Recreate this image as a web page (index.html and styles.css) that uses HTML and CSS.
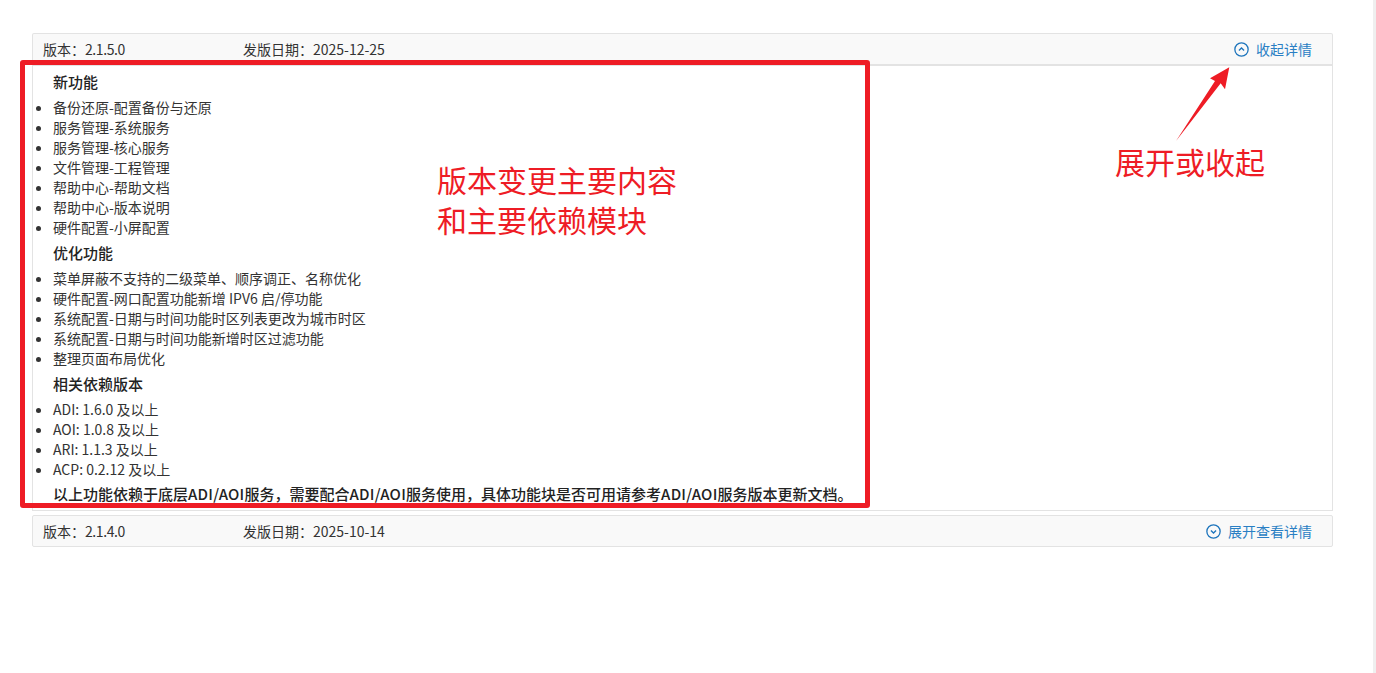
FILE: index.html
```html
<!DOCTYPE html>
<html lang="zh-CN">
<head>
<meta charset="utf-8">
<title>版本说明</title>
<link rel="stylesheet" href="styles.css">
</head>
<body>
<div class="page">
  <main class="releases">
    <section class="release">
      <header class="release-head">
        <span class="version">版本：<span class="num">2.1.5.0</span></span>
        <span class="date">发版日期：2025-12-25</span>
        <a class="toggle"><svg class="toggle-icon" viewBox="0 0 14 14"><circle cx="7" cy="7" r="6.2"/><path d="M4.6 8 7 5.6 9.4 8"/></svg>收起详情</a>
      </header>
      <div class="release-body">
        <h4 class="first">新功能</h4>
        <ul>
          <li>备份还原-配置备份与还原</li>
          <li>服务管理-系统服务</li>
          <li>服务管理-核心服务</li>
          <li>文件管理-工程管理</li>
          <li>帮助中心-帮助文档</li>
          <li>帮助中心-版本说明</li>
          <li>硬件配置-小屏配置</li>
        </ul>
        <h4>优化功能</h4>
        <ul>
          <li>菜单屏蔽不支持的二级菜单、顺序调正、名称优化</li>
          <li>硬件配置-网口配置功能新增 IPV6 启/停功能</li>
          <li>系统配置-日期与时间功能时区列表更改为城市时区</li>
          <li>系统配置-日期与时间功能新增时区过滤功能</li>
          <li>整理页面布局优化</li>
        </ul>
        <h4>相关依赖版本</h4>
        <ul>
          <li>ADI: 1.6.0 及以上</li>
          <li>AOI: 1.0.8 及以上</li>
          <li>ARI: 1.1.3 及以上</li>
          <li>ACP: 0.2.12 及以上</li>
        </ul>
        <h4 class="note">以上功能依赖于底层<span class="latin">ADI/AOI</span>服务，需要配合<span class="latin">ADI/AOI</span>服务使用，具体功能块是否可用请参考<span class="latin">ADI/AOI</span>服务版本更新文档。</h4>
      </div>
    </section>
    <section class="release">
      <header class="release-head closed">
        <span class="version">版本：<span class="num">2.1.4.0</span></span>
        <span class="date">发版日期：2025-10-14</span>
        <a class="toggle"><svg class="toggle-icon" viewBox="0 0 14 14"><circle cx="7" cy="7" r="6.2"/><path d="M4.6 6 7 8.4 9.4 6"/></svg>展开查看详情</a>
      </header>
    </section>
  </main>
  <div class="scroll-track"></div>
</div>
<div class="mark-box"></div>
<div class="mark-text mark-main">版本变更主要内容<br>和主要依赖模块</div>
<div class="mark-text mark-toggle">展开或收起</div>
<svg class="mark-arrow" viewBox="0 0 60 80"><path d="M0 79 39 19 34 16.3 53.3 5.3 49 27.3 44.7 21.3Z"/></svg>
</body>
</html>
```
FILE: styles.css
```css
* { box-sizing: border-box; }
html, body { margin: 0; height: 100%; overflow: hidden; background: #fff; }
body {
  font-family: "Noto Sans CJK SC", "Noto Sans", sans-serif;
  font-size: 14px;
  line-height: 20px;
  color: #333;
}
.page { display: flex; height: 673px; }
.releases { flex: 1; padding: 33px 40px 0 32px; }
.release { margin-bottom: 4px; }
.release-head {
  display: flex;
  align-items: center;
  height: 33px;
  padding: 0 20px 0 10px;
  background: #f9f9f9;
  border: 1px solid #e3e3e3;
  border-bottom-width: 2px;
  border-radius: 2px 2px 0 0;
}
.release-head.closed { height: 32px; border-bottom-width: 1px; border-radius: 2px; }
.version { width: 200px; }
.num { letter-spacing: -0.4px; }
.latin { letter-spacing: 0.25px; }
.toggle { display: flex; align-items: center; margin-left: auto; color: #2a7fc4; }
.toggle-icon {
  width: 15px;
  height: 15px;
  margin-right: 7px;
  fill: none;
  stroke: #1c74bc;
  stroke-width: 1.2;
}
.release-body {
  height: 445px;
  padding: 6px 0 0 20px;
  border: 1px solid #e3e3e3;
  border-top: 0;
}
h4 { margin: 6px 0 5px; font-size: 15px; line-height: 20px; font-weight: 500; color: #222; }
h4.first { margin-top: 0; }
h4.note { margin-top: 5px; margin-bottom: 0; white-space: nowrap; }
ul { margin: 0; padding: 0; }
li { list-style-position: outside; }
.scroll-track { width: 3px; flex: none; background: #efefef; }
.mark-box {
  position: absolute;
  left: 20px;
  top: 60px;
  width: 850px;
  height: 448px;
  border: 5px solid #ee1c25;
  border-radius: 3px;
}
.mark-text {
  position: absolute;
  color: #ee1c25;
  font-size: 30px;
  line-height: 40px;
  font-weight: 400;
  white-space: nowrap;
}
.mark-main { left: 437px; top: 159px; }
.mark-toggle { left: 1115px; top: 141px; }
.mark-arrow { position: absolute; left: 1176px; top: 62px; width: 60px; height: 80px; fill: #ee1c25; }
```
